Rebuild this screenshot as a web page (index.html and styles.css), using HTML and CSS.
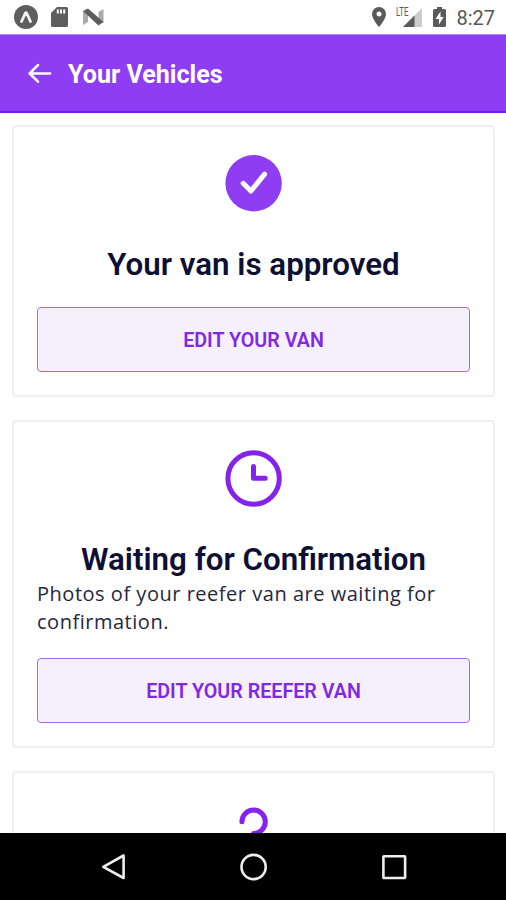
FILE: index.html
```html
<!DOCTYPE html>
<html lang="en">
<head>
<meta charset="utf-8">
<title>Your Vehicles</title>
<link rel="stylesheet" href="styles.css">
</head>
<body>
<div class="screen">
  <div class="status-bar">
    <div class="status-left">
      <svg width="24" height="24" viewBox="0 0 24 24"><circle cx="12" cy="12" r="12" fill="#5e5e5e"/><path d="M7.500 16.500 11.200 8.500Q12 7 12.800 8.500L16.500 16.500" fill="none" stroke="#f4f4f4" stroke-width="2.800" stroke-linecap="round" stroke-linejoin="round"/></svg>
      <svg class="sd" width="17" height="20" viewBox="0 0 17 20"><path d="M6 0h9.500Q17 0 17 1.500v17Q17 20 15.500 20h-14Q0 20 0 18.500V6Z" fill="#5e5e5e"/><path d="M6.800 2.500v4M10 2.500v4M13.200 2.500v4" stroke="#fff" stroke-width="2"/></svg>
      <svg class="n-logo" width="21" height="18" viewBox="0 0 21 18"><path d="M0 3 5 5V14L0 17ZM15.500 4 20.500 1v14l-5-2Z" fill="#aaa"/><path d="M0 3 5 .5 20.500 14 15.500 17.500Z" fill="#5e5e5e"/></svg>
    </div>
    <div class="status-right">
      <svg width="14" height="20" viewBox="0 0 14 20"><path fill-rule="evenodd" d="M7 0a7 7 0 0 0-7 7c0 5 7 13 7 13s7-8 7-13a7 7 0 0 0-7-7Zm0 4.500a2.500 2.500 0 1 1 0 5 2.500 2.500 0 0 1 0-5Z" fill="#5a5a5a"/></svg>
      <div class="signal">
        <svg width="19" height="19" viewBox="0 0 19 19"><path d="M0 19 19 0V19Z" fill="#ccc"/><path d="M0 19 11.500 7.500V19Z" fill="#5a5a5a"/></svg>
        <span class="lte">LTE</span>
      </div>
      <svg class="battery" width="13" height="20" viewBox="0 0 13 20"><path d="M4 0h5v2h2.500Q13 2 13 3.500v15Q13 20 11.500 20h-10Q0 20 0 18.500v-15Q0 2 1.500 2H4Z" fill="#5a5a5a"/><path d="M7.500 4.500 2.500 12H6v5.500L10.700 10H7.500Z" fill="#fff"/></svg>
      <span class="time">8:27</span>
    </div>
  </div>
  <header class="app-bar">
    <svg width="24" height="20" viewBox="0 0 24 20" fill="none" stroke="#fff" stroke-width="2.500" stroke-linecap="round" stroke-linejoin="round"><path d="M22.100 10.500H1.800M10 2 1.600 10.500l8.400 8.200"/></svg>
    <h1><span>Your Vehicles</span></h1>
  </header>
  <main class="list">
    <section class="card">
      <svg class="icon" width="58" height="58" viewBox="0 0 58 58"><circle cx="28.600" cy="29.200" r="28.200" fill="#8f3df3"/><path d="M18.200 29.300 25.900 37 39.600 20.200" fill="none" stroke="#fff" stroke-width="5" stroke-linecap="round" stroke-linejoin="round"/></svg>
      <h2>Your van is approved</h2>
      <button class="button">EDIT YOUR VAN</button>
    </section>
    <section class="card waiting">
      <svg class="icon" width="58" height="58" viewBox="0 0 58 58" fill="none" stroke="#8522ee" stroke-width="5"><circle cx="28.600" cy="29.500" r="25.700"/><path d="M28.500 17.400V29.300h11.700" stroke-linecap="round" stroke-linejoin="round"/></svg>
      <h2>Waiting for Confirmation</h2>
      <p>Photos of your reefer van are waiting for confirmation.</p>
      <button class="button">EDIT YOUR REEFER VAN</button>
    </section>
    <section class="card">
      <svg class="icon" width="58" height="58" viewBox="0 0 58 58" fill="none" stroke="#8522ee" stroke-width="5" stroke-linecap="round" stroke-linejoin="round"><path d="M16.900 21.800A11.700 11.700 0 1 1 28.600 33.500V38"/></svg>
    </section>
  </main>
  <nav class="nav-bar">
    <svg width="28" height="30" viewBox="0 0 28 30"><path d="M24.600 3.500V26L4.300 14.800Z" fill="none" stroke="#eee" stroke-width="2.600" stroke-linejoin="round"/></svg>
    <svg width="28" height="30" viewBox="0 0 28 30"><circle cx="14.600" cy="15" r="12.100" fill="none" stroke="#eee" stroke-width="2.600"/></svg>
    <svg width="28" height="30" viewBox="0 0 28 30"><rect x="4.400" y="4.300" width="21.700" height="21.700" rx=".5" fill="none" stroke="#eee" stroke-width="2.600"/></svg>
  </nav>
</div>
</body>
</html>
```
FILE: styles.css
```css
* { box-sizing: border-box; }
body { margin: 0; background: #fff; font-family: Roboto, "Liberation Sans", sans-serif; }
svg { display: block; flex: none; }
h1, h2, p { margin: 0; }
.screen { width: 506px; height: 900px; display: flex; flex-direction: column; overflow: hidden; }
.status-bar { height: 34px; flex: none; display: flex; justify-content: space-between; padding: 5px 11px 0 14px; background: #fff; }
.status-left, .status-right { display: flex; align-items: flex-start; }
.status-right { padding-top: 2px; }
.sd { margin: 2px 0 0 13px; }
.n-logo { margin: 3px 0 0 15px; }
.signal { display: grid; margin-left: 10px; width: 26px; height: 20px; }
.signal > * { grid-area: 1 / 1; }
.signal svg { justify-self: end; margin-top: 1px; }
.lte { font-size: 12px; line-height: 11px; color: #5a5a5a; transform: scaleX(.66); transform-origin: left; }
.battery { margin: 0 10px 0 11px; }
.time { font-size: 20px; line-height: 23px; color: #565656; }
.app-bar { height: 79px; flex: none; display: flex; align-items: center; gap: 16px; padding: 0 28px; background: #8f3df3; border-top: 1px solid #b884f5; border-bottom: 2px solid #7919e5; }
h1 { font-size: 26px; line-height: 30px; font-weight: 700; color: #fff; padding-top: 1px; white-space: nowrap; }
h1 span { display: inline-block; transform: scaleX(.965); transform-origin: left; }
.list { flex: 1; min-height: 0; overflow: hidden; display: flex; flex-direction: column; gap: 23px; padding: 12px 11px 0 12px; background: #fff; }
.card { height: 272px; flex: none; border: 2px solid #edf0f3; border-radius: 4px; padding: 27px 23px 0; background: #fff; display: flex; flex-direction: column; }
.waiting { height: 328px; }
.icon { align-self: center; }
h2 { align-self: center; margin-top: 34px; font-size: 31.300px; line-height: 38px; font-weight: 600; color: #0d0f33; white-space: nowrap; }
p { font-family: "Open Sans", "Noto Sans", sans-serif; font-size: 20px; line-height: 28px; color: #25273f; margin-top: 1px; letter-spacing: .52px; }
.button { height: 65px; flex: none; margin-top: 23px; padding: 2px 0 0; border: 1.500px solid #a56bed; border-radius: 4px; background: #f6effe; color: #8129e2; font: 600 19.700px/24px Roboto, "Liberation Sans", sans-serif; }
.waiting .button { margin-top: 22px; }
.nav-bar { height: 67px; flex: none; background: #000; display: flex; justify-content: center; align-items: center; gap: 112px; }
```
